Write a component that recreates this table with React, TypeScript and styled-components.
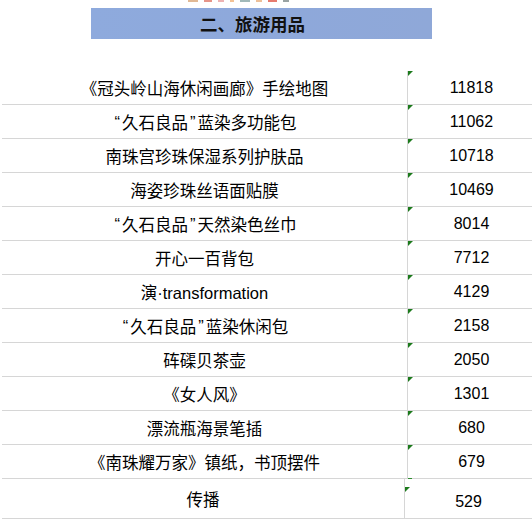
import React from "react";
import styled, { createGlobalStyle } from "styled-components";

const Global = createGlobalStyle`
  html, body { margin: 0; padding: 0; background: #ffffff; overflow: hidden; }
  body { font-family: "Liberation Sans", "Noto Sans CJK SC", sans-serif; color: #000; }
`;

const Page = styled.div`
  width: 532px;
  height: 519px;
  display: flex;
  flex-direction: column;
  overflow: hidden;
`;

const TopStrip = styled.div`
  height: 3px;
  margin-left: 188px;
  width: 150px;
  display: flex;
  gap: 6px;
  align-items: flex-start;
`;

const Fleck = styled.span<{ $c: string; $w: number }>`
  display: block;
  height: 2px;
  width: ${(p) => p.$w}px;
  background: ${(p) => p.$c};
  opacity: 0.8;
`;

const Header = styled.div`
  margin-top: 5px;
  margin-left: 91px;
  width: 341px;
  height: 31px;
  background: linear-gradient(90deg, #8eaadd 0%, #8ea8da 60%, #8fa8d8 100%);
  display: flex;
  align-items: center;
  justify-content: center;
  font-family: "Noto Sans CJK SC", sans-serif;
  font-weight: 700;
  font-size: 17.5px;
  color: #111;
  padding-right: 18px;
  box-sizing: border-box;
`;

const Table = styled.div`
  margin-top: 32px;
  display: flex;
  flex-direction: column;
`;

const Row = styled.div<{ $tall?: boolean }>`
  display: flex;
  height: ${(p) => (p.$tall ? 40 : 34)}px;
  margin-left: 2px;
  border-bottom: 1px solid #d6d6d6;
  box-sizing: border-box;
  flex-shrink: 0;
`;

const NameCell = styled.div<{ $w: number }>`
  width: ${(p) => p.$w}px;
  flex-shrink: 0;
  display: flex;
  align-items: center;
  justify-content: center;
  font-size: 16.5px;
  white-space: nowrap;
  padding-top: 1px;
  box-sizing: border-box;
`;

const Quote = styled.span`
  display: inline-block;
  padding: 0 2px;
`;

const NumCell = styled.div<{ $pt: number }>`
  position: relative;
  width: 128px;
  flex-shrink: 0;
  border-left: 1px solid #d6d6d6;
  display: flex;
  align-items: center;
  justify-content: center;
  font-family: "Liberation Sans", sans-serif;
  font-size: 16px;
  padding-top: ${(p) => p.$pt}px;
  box-sizing: border-box;
`;

const Flag = styled.span<{ $top: number }>`
  position: absolute;
  left: 0;
  top: ${(p) => p.$top}px;
  width: 0;
  height: 0;
  border-top: 5px solid #1c7a1c;
  border-right: 5px solid transparent;
`;

const Dash = styled.span`
  position: absolute;
  left: 3px;
  top: -1px;
  width: 4px;
  height: 1px;
  background: #2e8b2e;
`;

const rows: [string, string][] = [
  ["《冠头岭山海休闲画廊》手绘地图", "11818"],
  ["“久石良品”蓝染多功能包", "11062"],
  ["南珠宫珍珠保湿系列护肤品", "10718"],
  ["海姿珍珠丝语面贴膜", "10469"],
  ["“久石良品”天然染色丝巾", "8014"],
  ["开心一百背包", "7712"],
  ["演·transformation", "4129"],
  ["“久石良品”蓝染休闲包", "2158"],
  ["砗磲贝茶壶", "2050"],
  ["《女人风》", "1301"],
  ["漂流瓶海景笔插", "680"],
  ["《南珠耀万家》镇纸，书顶摆件", "679"],
];

function renderName(name: string) {
  return name.split(/([“”])/).map((part, i) =>
    part === "“" || part === "”" ? <Quote key={i}>{part}</Quote> : <React.Fragment key={i}>{part}</React.Fragment>
  );
}

export default function App() {
  return (
    <Page>
      <Global />
      <TopStrip>
        <Fleck $c="#d9a77a" $w={10} />
        <Fleck $c="#e07b6b" $w={8} />
        <Fleck $c="#e8a0a0" $w={6} />
        <Fleck $c="#f0b37a" $w={4} />
        <Fleck $c="#8aa7a8" $w={10} />
        <Fleck $c="#e8b080" $w={6} />
        <Fleck $c="#e05a4a" $w={9} />
        <Fleck $c="#7f8c8c" $w={6} />
      </TopStrip>
      <Header>二、旅游用品</Header>
      <Table>
        {rows.map(([name, num]) => (
          <Row key={name}>
            <NameCell $w={405}>{renderName(name)}</NameCell>
            <NumCell $pt={0}>
              <Flag $top={0} />
              {num}
            </NumCell>
          </Row>
        ))}
        <Row $tall>
          <NameCell $w={402}>传播</NameCell>
          <NumCell $pt={6}>
            <Dash />
            <Flag $top={8} />
            529
          </NumCell>
        </Row>
      </Table>
    </Page>
  );
}
